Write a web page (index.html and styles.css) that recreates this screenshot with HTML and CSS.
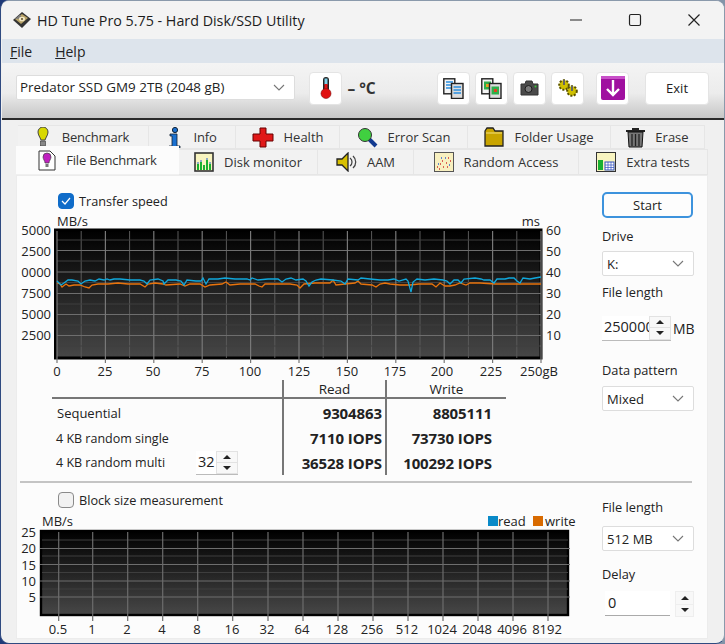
FILE: index.html
```html
<!DOCTYPE html>
<html lang="en">
<head>
    <meta charset="UTF-8">
    <title>HD Tune Pro 5.75 - Hard Disk/SSD Utility</title>
    <link rel="stylesheet" href="styles.css">
</head>
<body>
<div class="window">
    <div class="titlebar">
        <svg class="app-icon" width="20" height="20" viewBox="0 0 20 20">
            <path d="M1 10 10 2l9 7-9 9z" fill="#333"/>
            <path d="M3 9 10 4l6 4-7 6z" fill="#b9a468"/>
            <path d="M3 9 8 4.500l2 4z" fill="#7d7d7d"/>
            <ellipse cx="10" cy="9" rx="3" ry="2.300" fill="#f2e7c4"/>
            <circle cx="10" cy="9" r=".9" fill="#4a3d18"/>
        </svg>
        <span class="title">HD Tune Pro 5.75 - Hard Disk/SSD Utility</span>
        <div class="win-controls">
            <svg width="14" height="14" viewBox="0 0 14 14"><path d="M1 7h12" stroke="#222" stroke-width="1.2"/></svg>
            <svg width="14" height="14" viewBox="0 0 14 14"><rect x="1.5" y="1.5" width="11" height="11" rx="1.5" fill="none" stroke="#222" stroke-width="1.2"/></svg>
            <svg width="14" height="14" viewBox="0 0 14 14"><path d="M1.5 1.5l11 11M12.5 1.5l-11 11" stroke="#222" stroke-width="1.2"/></svg>
        </div>
    </div>

    <div class="menubar">
        <span><u>F</u>ile</span>
        <span><u>H</u>elp</span>
    </div>

    <div class="toolbar">
        <div class="select drive-select">Predator SSD GM9 2TB (2048 gB)<svg class="chevron" width="12" height="7" viewBox="0 0 12 7"><path d="M1 1l5 5 5-5" fill="none" stroke="#777" stroke-width="1.1"/></svg></div>
        <div class="tool-btn temp-btn">
            <svg width="12" height="22" viewBox="0 0 12 22">
                <rect x="3" y="0" width="6" height="15" rx="3" fill="#222"/>
                <rect x="4.500" y="1.500" width="3" height="6" fill="#7fd0e8"/>
                <rect x="4.500" y="7" width="3" height="9" fill="#e01010"/>
                <circle cx="6" cy="16.500" r="5" fill="#e01010" stroke="#801010" stroke-width=".6"/>
            </svg>
        </div>
        <span class="temp">&ndash; &deg;C</span>
        <div class="tool-group">
            <div class="tool-btn">
                <svg width="21" height="21" viewBox="0 0 21 21">
                    <rect x=".8" y=".8" width="11" height="15" fill="#f4f4f4" stroke="#222" stroke-width="1.400"/>
                    <path d="M3 4h7M3 7h7M3 10h7" stroke="#2a8fe0" stroke-width="1.500"/>
                    <rect x="8.500" y="5.500" width="11.500" height="15" fill="#ddd" stroke="#222" stroke-width="1.400"/>
                    <path d="M10.500 9h7.500M10.500 12h7.500M10.500 15h7.500" stroke="#2a8fe0" stroke-width="1.500"/>
                </svg>
            </div>
            <div class="tool-btn">
                <svg width="21" height="21" viewBox="0 0 21 21">
                    <rect x=".8" y=".8" width="11" height="15" fill="#f4f4f4" stroke="#222" stroke-width="1.400"/>
                    <rect x="3" y="3.500" width="7" height="8" fill="#2fae4a"/>
                    <rect x="5" y="6" width="3" height="3" fill="#e8a020"/>
                    <rect x="8.500" y="5.500" width="11.500" height="15" fill="#ddd" stroke="#222" stroke-width="1.400"/>
                    <rect x="10.500" y="8.500" width="7.500" height="8" fill="#2fae4a"/>
                    <rect x="13" y="11" width="3" height="3" fill="#e04020"/>
                </svg>
            </div>
            <div class="tool-btn">
                <svg width="19" height="16" viewBox="0 0 19 16">
                    <path d="M1 4h4l1-3h6l1 3h5v11H1z" fill="#4a4a4a" stroke="#333"/>
                    <circle cx="8.500" cy="9" r="3.500" fill="#7a7a7a" stroke="#1c1c1c"/>
                    <circle cx="15.500" cy="6.500" r="1" fill="#3c3"/>
                </svg>
            </div>
            <div class="tool-btn">
                <svg width="22" height="20" viewBox="0 0 22 20">
                    <circle cx="7" cy="7" r="4.800" fill="#cfc000" stroke="#5a5200" stroke-width="2" stroke-dasharray="2 1.500"/>
                    <circle cx="15" cy="13" r="4.800" fill="#cfc000" stroke="#5a5200" stroke-width="2" stroke-dasharray="2 1.500"/>
                    <path d="M7 2v5M15 8v5" stroke="#666" stroke-width="2"/>
                </svg>
            </div>
        </div>
        <div class="tool-btn save-btn">
            <svg width="24" height="24" viewBox="0 0 24 24">
                <rect width="24" height="24" rx="2" fill="#a010a0"/>
                <path d="M0 0h24v3H0z" fill="#c850c8"/>
                <path d="M12 4v15M6 13l6 6 6-6" fill="none" stroke="#fff" stroke-width="2.400"/>
            </svg>
        </div>
        <div class="tool-btn exit-btn">Exit</div>
    </div>

    <div class="tabs tabs-back">
        <div class="tab wide-gap">
            <svg width="12" height="21" viewBox="0 0 12 21"><path d="M1 5a5 5 0 0 1 10 0c0 3-2 5-3 8H4C3 10 1 8 1 5z" fill="#d8d800" stroke="#444"/><rect x="3.500" y="14" width="5" height="5" fill="#888" stroke="#333" stroke-width=".6"/></svg>
            Benchmark
        </div>
        <div class="tab wide-gap">
            <svg width="13" height="21" viewBox="0 0 13 21"><circle cx="7" cy="3" r="2.600" fill="#1a70d0" stroke="#123"/><path d="M2 7h7v12h3v2H1v-2h3V9H2z" fill="#1a70d0" stroke="#123" stroke-width=".8"/></svg>
            Info
        </div>
        <div class="tab">
            <svg width="22" height="21" viewBox="0 0 22 21"><path d="M8 1h6v6h7v7h-7v6H8v-6H1V7h7z" fill="#e01818" stroke="#600"/></svg>
            Health
        </div>
        <div class="tab">
            <svg width="21" height="21" viewBox="0 0 21 21"><path d="M12 12l7 7" stroke="#123a90" stroke-width="4"/><circle cx="8" cy="8" r="6.500" fill="#40d040" stroke="#333"/></svg>
            Error Scan
        </div>
        <div class="tab">
            <svg width="20" height="20" viewBox="0 0 20 20"><path d="M1 4l2-3h6l2 3h8v15H1z" fill="#c8a400" stroke="#222" stroke-width="1.300"/><path d="M2 6h16" stroke="#f4e080"/></svg>
            Folder Usage
        </div>
        <div class="tab">
            <svg width="19" height="21" viewBox="0 0 19 21"><path d="M6 1h7v2h6v2H0V3h6z" fill="#222"/><path d="M2 5h15l-1 15H3z" fill="#777" stroke="#111"/><path d="M6 7v12M9.500 7v12M13 7v12" stroke="#222" stroke-width="1.300"/></svg>
            Erase
        </div>
    </div>
    <div class="tabs tabs-front">
        <div class="tab active">
            <svg width="18" height="21" viewBox="0 0 18 21"><path d="M1 1h11l5 5v14H1z" fill="#fff" stroke="#333"/><path d="M5 7a4 4 0 0 1 8 0c0 2-2 4-2 6H7c0-2-2-4-2-6z" fill="#c020c0" stroke="#444" stroke-width=".7"/><rect x="7.500" y="14" width="3" height="3" fill="#777"/></svg>
            File Benchmark
        </div>
        <div class="tab">
            <svg width="20" height="20" viewBox="0 0 20 20"><rect x="1" y="1" width="18" height="18" fill="#f8f4c0" stroke="#333" stroke-width="1.600"/><path d="M3 18v-6h2v6zM6 18v-8h2v8zM9 18v-5h2v5zM12 18V8h2v10zM15 18v-6h2v6z" fill="#18b030"/><path d="M3 11h2M6 9h2M12 7h2M15 11h2" stroke="#2060d0"/></svg>
            Disk monitor
        </div>
        <div class="tab">
            <svg width="21" height="20" viewBox="0 0 21 20"><path d="M1 7h5l6-6v18l-6-6H1z" fill="#d8c000" stroke="#222" stroke-width="1.300"/><path d="M14 6a5 5 0 0 1 0 8M17 4a8 8 0 0 1 0 12" fill="none" stroke="#444" stroke-width="1.300"/></svg>
            AAM
        </div>
        <div class="tab">
            <svg width="20" height="20" viewBox="0 0 20 20"><rect x=".5" y=".5" width="19" height="19" fill="#f8f0c0" stroke="#555"/><path d="M3 15h1M6 12h1M9 15h1M8 9h1M12 11h1M14 6h1M16 9h1M13 15h1M5 17h1" stroke="#d03030" stroke-width="1.500"/><path d="M4 12h1M11 6h1M15 13h1M7 6h1" stroke="#3060d0" stroke-width="1.500"/></svg>
            Random Access
        </div>
        <div class="tab">
            <svg width="20" height="20" viewBox="0 0 20 20"><rect x=".5" y=".5" width="19" height="19" fill="#f8f4c0" stroke="#333"/><rect x="2" y="8" width="5" height="10" fill="#18b030"/><rect x="9" y="10" width="9" height="8" fill="#fff" stroke="#3050c0"/><path d="M9 13h9M9 15.500h9M12 10v8M15 10v8" stroke="#3050c0" stroke-width=".7"/></svg>
            Extra tests
        </div>
    </div>

    <div class="panel">
        <section class="section section-top">
            <div class="main">
                <label class="check checked">
                    <span class="box"><svg width="10" height="8" viewBox="0 0 10 8"><path d="M1 4l3 3 5-6" fill="none" stroke="#fff" stroke-width="1.2"/></svg></span>
                    Transfer speed
                </label>
                <svg class="chart chart-speed" width="570" height="168" viewBox="20 212 570 168">
                    <defs>
                        <linearGradient id="plot" x1="0" y1="0" x2="0" y2="1">
                            <stop offset="0" stop-color="#000"/>
                            <stop offset="1" stop-color="#474747"/>
                        </linearGradient>
                    </defs>
                    <rect x="55.500" y="230" width="485.500" height="128" fill="url(#plot)" stroke="#000" stroke-width="3"/>
                    <path d="M81.200 231V358M129.600 231V358M178 231V358M226.400 231V358M274.800 231V358M323.200 231V358M371.600 231V358M420 231V358M468.400 231V358M516.800 231V358" stroke="#5a5a5a"/>
                    <path d="M57 240H541M57 261H541M57 282.500H541M57 304H541M57 325H541M57 346H541" stroke="#3e3e3e"/>
                    <path d="M57 250.500H541M57 272H541M57 293.500H541M57 314.500H541M57 335.500H541" stroke="#6e6e6e"/>
                    <path d="M57 231V363M105.400 231V363M153.800 231V363M202.200 231V363M250.600 231V363M299 231V363M347.400 231V363M395.800 231V363M444.200 231V363M492.600 231V363M541 231V363" stroke="#787878" stroke-width="1.200"/>
                    <polyline class="write-line" points="57,283 60,284 62,287 66,284 69,286 74,285 80,285 85,287 89,288 92,285 98,284 108,284 118,283 128,284 140,284 145,287 148,284 155,283 163,284 166,285 180,284 185,286 190,284 200,284 205,287 210,285 222,284 226,282 230,285 240,284 255,284 259,286 262,287 265,284 280,284 290,284 297,285 300,288 304,284 315,283 330,283 333,280 336,285 345,284 355,283 358,281 361,284 372,285 376,287 380,284 385,283 390,284 400,285 410,285 419,284 432,284 436,287 440,283 445,286 450,286 455,285 460,283 466,285 470,283 480,283 495,284 510,284 541,284"/>
                    <polyline class="read-line" points="57,281 61,285 64,283 68,280 72,280 78,281 81,284 85,281 90,280 95,281 99,279 104,280 107,279 110,280 114,279 120,279 130,280 140,280 144,281 147,284 150,280 158,279 163,281 164,284 168,280 176,280 181,281 184,285 187,280 196,281 201,281 203,278 206,284 209,279 218,279 225,278 235,279 247,279 250,280 252,278 258,280 268,279 278,279 282,282 286,279 291,278 296,280 303,279 306,281 309,286 312,282 316,280 321,279 333,280 341,281 345,284 348,279 358,280 361,278 370,279 380,280 388,280 394,279 399,281 406,279 408,281 411,292 413,282 417,279 425,280 434,279 443,280 447,281 450,284 454,280 458,280 461,283 464,279 475,278 481,279 484,280 490,280 494,283 497,279 505,279 509,278 514,278 517,281 520,283 523,278 530,279 535,278 541,277"/>
                    <text x="57" y="226">MB/s</text>
                    <text x="540" y="226" text-anchor="end">ms</text>
                    <g text-anchor="end">
                        <text x="51" y="235">5000</text>
                        <text x="51" y="256">2500</text>
                        <text x="51" y="277">0000</text>
                        <text x="51" y="298">7500</text>
                        <text x="51" y="319">5000</text>
                        <text x="51" y="340">2500</text>
                    </g>
                    <g>
                        <text x="546" y="235">60</text>
                        <text x="546" y="256">50</text>
                        <text x="546" y="277">40</text>
                        <text x="546" y="298">30</text>
                        <text x="546" y="319">20</text>
                        <text x="546" y="340">10</text>
                    </g>
                    <g text-anchor="middle">
                        <text x="57" y="376">0</text>
                        <text x="105" y="376">25</text>
                        <text x="153" y="376">50</text>
                        <text x="202" y="376">75</text>
                        <text x="250" y="376">100</text>
                        <text x="299" y="376">125</text>
                        <text x="347" y="376">150</text>
                        <text x="395" y="376">175</text>
                        <text x="442" y="376">200</text>
                        <text x="491" y="376">225</text>
                        <text x="539" y="376">250gB</text>
                    </g>
                </svg>
                <div class="results">
                    <div></div><div class="col-head">Read</div><div class="col-head">Write</div>
                    <div class="row-name row-seq">Sequential</div><div class="val row-seq">9304863</div><div class="val row-seq">8805111</div>
                    <div class="row-name">4 KB random single</div><div class="val">7110 IOPS</div><div class="val">73730 IOPS</div>
                    <div class="row-name row-multi">4 KB random multi
                        <div class="spin queue-spin"><span class="spin-val">32</span>
                            <div class="spin-btns"><span class="up"></span><span class="down"></span></div>
                        </div>
                    </div><div class="val">36528 IOPS</div><div class="val">100292 IOPS</div>
                </div>
            </div>
            <aside class="side">
                <div class="start-btn">Start</div>
                <div class="field-label drive-label">Drive</div>
                <div class="select side-select">K:<svg class="chevron" width="12" height="7" viewBox="0 0 12 7"><path d="M1 1l5 5 5-5" fill="none" stroke="#777" stroke-width="1.100"/></svg></div>
                <div class="field-label">File length</div>
                <div class="length-row">
                    <div class="spin length-spin"><span class="spin-val">250000</span>
                        <div class="spin-btns"><span class="up"></span><span class="down"></span></div>
                    </div>
                    <span>MB</span>
                </div>
                <div class="field-label pattern-label">Data pattern</div>
                <div class="select side-select">Mixed<svg class="chevron" width="12" height="7" viewBox="0 0 12 7"><path d="M1 1l5 5 5-5" fill="none" stroke="#777" stroke-width="1.100"/></svg></div>
            </aside>
        </section>

        <hr class="divider">

        <section class="section section-bottom">
            <div class="main">
                <label class="check">
                    <span class="box"></span>
                    Block size measurement
                </label>
                <svg class="chart chart-block" width="570" height="125" viewBox="20 512 570 125">
                    <rect x="41" y="531" width="527" height="84" fill="url(#plot)" stroke="#000" stroke-width="2.400"/>
                    <path d="M42 540H568M42 556H568M42 572.500H568M42 589H568" stroke="#3e3e3e"/>
                    <path d="M40 548.500H570M40 564.500H570M40 581H570M40 597H570" stroke="#6e6e6e"/>
                    <path d="M58.700 532V621M92.700 532V621M127.700 532V621M162.700 532V621M197.700 532V621M232.700 532V621M268 532V621M303 532V621M338 532V621M373 532V621M408 532V621M443 532V621M478 532V621M513 532V621M548 532V621" stroke="#6c6c6c" stroke-width="1.200"/>
                    <text x="42" y="526">MB/s</text>
                    <rect x="488" y="516" width="10" height="10" fill="#0a8ac8"/>
                    <text x="498" y="526">read</text>
                    <rect x="533" y="516" width="10" height="10" fill="#d86a00"/>
                    <text x="545" y="526">write</text>
                    <g text-anchor="end">
                        <text x="36" y="537">25</text>
                        <text x="36" y="553">20</text>
                        <text x="36" y="570">15</text>
                        <text x="36" y="586">10</text>
                        <text x="36" y="602">5</text>
                    </g>
                    <g text-anchor="middle">
                        <text x="58" y="634">0.5</text>
                        <text x="92" y="634">1</text>
                        <text x="127" y="634">2</text>
                        <text x="162" y="634">4</text>
                        <text x="197" y="634">8</text>
                        <text x="232" y="634">16</text>
                        <text x="267" y="634">32</text>
                        <text x="302" y="634">64</text>
                        <text x="337" y="634">128</text>
                        <text x="372" y="634">256</text>
                        <text x="407" y="634">512</text>
                        <text x="442" y="634">1024</text>
                        <text x="477" y="634">2048</text>
                        <text x="512" y="634">4096</text>
                        <text x="547" y="634">8192</text>
                    </g>
                </svg>
            </div>
            <aside class="side">
                <div class="field-label block-length-label">File length</div>
                <div class="select side-select">512 MB<svg class="chevron" width="12" height="7" viewBox="0 0 12 7"><path d="M1 1l5 5 5-5" fill="none" stroke="#777" stroke-width="1.100"/></svg></div>
                <div class="field-label delay-label">Delay</div>
                <div class="delay-row">
                    <div class="delay-input">0</div>
                    <div class="spin-btns delay-btns"><span class="up"></span><span class="down"></span></div>
                </div>
            </aside>
        </section>
    </div>
</div>
</body>
</html>
```

FILE: styles.css
```css
* {
    box-sizing: border-box;
}

html, body {
    margin: 0;
    height: 100%;
}

body {
    width: 725px;
    height: 644px;
    overflow: hidden;
    background: linear-gradient(90deg, #1f3a78 0%, #8394a8 100%);
    font-family: "Open Sans", sans-serif;
    font-size: 13px;
    color: #222;
}

.window {
    width: 725px;
    height: 644px;
    padding: 0 0 0 1px;
    background: #f0f0f0;
    border: 1px solid #2f4a80;
    border-right-color: #8a99ab;
    border-top-color: #8a99ab;
    border-radius: 9px;
    overflow: hidden;
}

.titlebar {
    height: 38px;
    display: flex;
    align-items: center;
    padding-left: 10px;
    background: #f3f3f3;
}

.app-icon {
    margin-right: 5px;
}

.title {
    font-size: 14.300px;
    color: #1c1c1c;
}

.win-controls {
    margin-left: auto;
    display: flex;
    gap: 45px;
    padding-right: 23px;
}

.menubar {
    height: 24px;
    display: flex;
    align-items: center;
    gap: 23px;
    padding-left: 8px;
    background: #dde4ec;
    font-size: 14px;
}

.toolbar {
    height: 57px;
    display: flex;
    align-items: center;
    padding: 0 15px 5px 14px;
    background: linear-gradient(180deg, #f4f4f4 0%, #ececec 55%, #c6c6c6 100%);
    border-bottom: 2px solid #2a2a2a;
}

.select {
    height: 25px;
    display: flex;
    align-items: center;
    justify-content: space-between;
    padding: 0 9px 0 4px;
    background: #fff;
    border: 1px solid #ddd;
    border-radius: 2px;
    font-size: 13px;
}

.drive-select {
    width: 280px;
    margin-right: 14px;
    margin-bottom: 2px;
    padding-left: 3px;
    font-size: 13.400px;
}

.tool-btn {
    width: 33px;
    height: 33px;
    display: flex;
    align-items: center;
    justify-content: center;
    background: #fff;
    border: 1px solid #e4e4e4;
    border-radius: 4px;
}

.temp {
    margin-left: 5px;
    font-weight: 700;
    font-size: 15.500px;
    color: #333;
    width: 90px;
}

.tool-group {
    display: flex;
    gap: 5px;
}

.save-btn {
    margin-left: 12px;
}

.exit-btn {
    width: 64px;
    margin-left: 16px;
    font-size: 13px;
}

.tabs {
    display: grid;
    font-size: 13px;
    color: #333;
}

.tabs-back {
    height: 24px;
    margin-top: 5px;
    margin-left: 16px;
    width: 687px;
    grid-template-columns: 131px 87px 104px 128px 143px 94px;
}

.tabs-front {
    height: 26px;
    margin-left: 14px;
    width: 692px;
    grid-template-columns: 163px 139px 96px 165px 129px;
}

.tab {
    display: flex;
    align-items: center;
    justify-content: center;
    gap: 10px;
    background: #f2f2f2;
    border: 1px solid #e6e6e6;
    border-left: 0;
}

.tab.wide-gap {
    gap: 13px;
    letter-spacing: -0.2px;
}

.tab.active {
    height: 28px;
    margin-top: -3px;
    background: #fcfcfc;
    border: 0;
    letter-spacing: -0.2px;
}

.panel {
    width: 692px;
    height: 464px;
    margin-left: 14px;
    padding: 16px 0 0 0;
    background: #fcfcfc;
    border: 1px solid #ececec;
}

.section {
    display: grid;
    grid-template-columns: 585px 92px;
}

.section-top {
    height: 289px;
}

.main {
    min-width: 0;
}

.check {
    display: flex;
    align-items: center;
    gap: 5px;
    margin-left: 41px;
    height: 17px;
    font-size: 12.700px;
}

.section-bottom .check {
    margin-top: 8px;
}

.box {
    width: 16px;
    height: 16px;
    display: flex;
    align-items: center;
    justify-content: center;
    border: 1px solid #8a8a8a;
    border-radius: 4px;
    background: #f2f2f2;
}

.check.checked .box {
    background: #0f6cc9;
    border-color: #0f6cc9;
}

.chart {
    display: block;
    margin-left: 3px;
    font-size: 13px;
    fill: #222;
}

.chart-speed {
    margin-top: 3px;
}

.chart-block {
    margin-top: 4px;
}

.read-line, .write-line {
    fill: none;
    stroke-width: 1.300;
}

.read-line {
    stroke: #10a8dc;
}

.write-line {
    stroke: #e8730c;
}

.results {
    display: grid;
    grid-template-columns: 230px 105px 119px;
    grid-template-rows: 19px 27px 24px 25px;
    width: 454px;
    margin-left: 35px;
    font-size: 12.500px;
}

.results > div {
    display: flex;
    align-items: center;
}

.results > div:nth-child(-n+3) {
    border-bottom: 2px solid #777;
}

.results > div:nth-child(3n+2) {
    border-left: 2px solid #777;
    border-right: 2px solid #777;
}

.col-head {
    justify-content: center;
    font-size: 13.500px;
}

.row-name {
    padding-left: 4px;
}

.row-seq.row-name {
    padding-left: 5px;
    font-size: 13px;
}

.val {
    justify-content: flex-end;
    font-weight: 700;
    font-size: 15px;
    letter-spacing: -0.1px;
    padding-right: 3px;
}

.results > .val:nth-child(3n) {
    padding-right: 14px;
}

.row-multi {
    justify-content: space-between;
    padding-right: 44px;
}

.spin {
    display: flex;
    align-items: stretch;
    background: #fff;
    border-bottom: 1px solid #bbb;
    overflow: hidden;
}

.queue-spin {
    width: 42px;
    height: 24px;
}

.spin-val {
    flex: 1;
    min-width: 0;
    overflow: hidden;
    padding-left: 2px;
    line-height: 22px;
    font-size: 14.500px;
}

.spin-btns {
    width: 22px;
    flex: none;
    display: flex;
    flex-direction: column;
    gap: 1px;
    padding: 1px;
    background: #e2e2e2;
}

.spin-btns span {
    flex: 1;
    display: flex;
    align-items: center;
    justify-content: center;
    background: #f8f8f8;
}

.spin-btns .up::after, .spin-btns .down::after {
    content: "";
    border-left: 4px solid transparent;
    border-right: 4px solid transparent;
}

.spin-btns .up::after {
    border-bottom: 4px solid #222;
}

.spin-btns .down::after {
    border-top: 4px solid #222;
}

.side {
    display: flex;
    flex-direction: column;
    font-size: 13px;
}

.start-btn {
    width: 91px;
    height: 26px;
    display: flex;
    align-items: center;
    justify-content: center;
    background: #fdfdfd;
    border: 2px solid #3d93dd;
    border-radius: 5px;
}

.field-label {
    height: 18px;
    line-height: 18px;
    margin-bottom: 6px;
    font-size: 12.800px;
}

.drive-label {
    margin-top: 9px;
}

.side-select {
    width: 92px;
    flex: none;
}

.side-select + .field-label {
    margin-top: 7px;
}

.length-row {
    display: flex;
    align-items: center;
    gap: 2px;
    height: 24px;
    margin-top: 9px;
    font-size: 14px;
}

.length-spin {
    width: 69px;
    height: 25px;
    flex: none;
}

.pattern-label {
    margin-top: 21px;
    margin-bottom: 7px;
}

.divider {
    width: 672px;
    height: 2px;
    margin: 0 0 0 3px;
    border: 0;
    background: #c4c4c4;
}

.section-bottom .block-length-label {
    margin-top: 15px;
    margin-bottom: 10px;
}

.section-bottom .side-select + .delay-label {
    margin-top: 14px;
}

.delay-row {
    display: flex;
    justify-content: space-between;
    width: 92px;
    margin-top: 2px;
}

.delay-input {
    width: 65px;
    height: 25px;
    margin-left: 3px;
    padding-left: 3px;
    line-height: 24px;
    background: #fff;
    border-bottom: 1px solid #aaa;
    font-size: 14.500px;
}

.delay-btns {
    width: 19px;
    height: 26px;
    background: #eee;
}
```
